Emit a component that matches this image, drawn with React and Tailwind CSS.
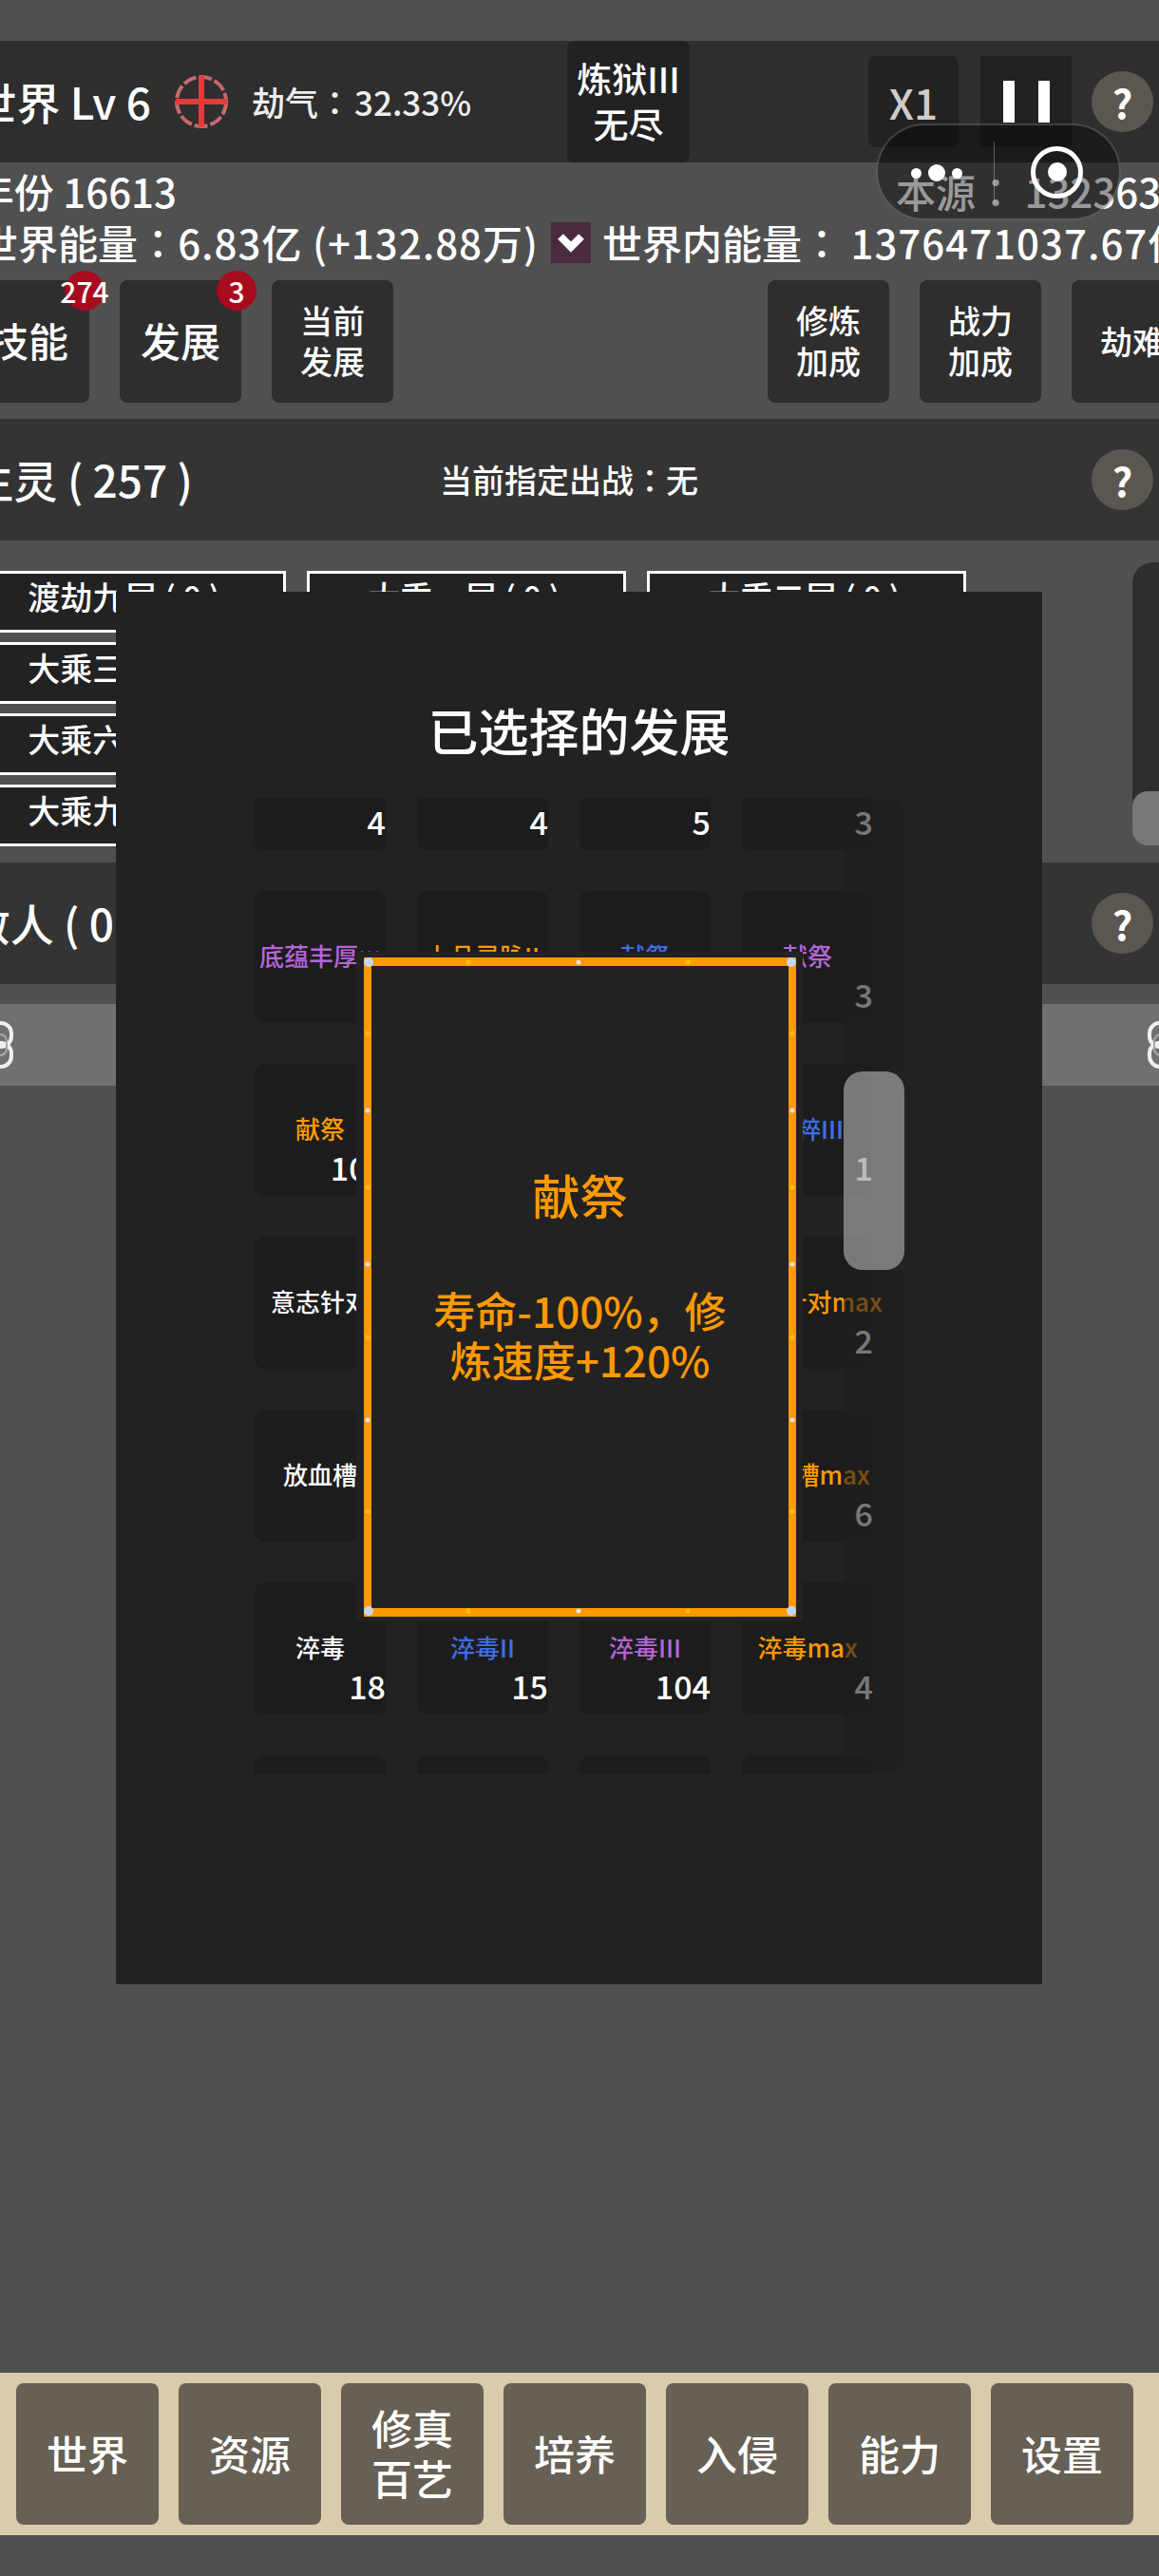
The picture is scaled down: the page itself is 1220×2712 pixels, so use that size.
const CELLS = [
  [{ value: 4 }, { value: 4 }, { value: 5 }, { value: 3 }],
  [
    {
      name: (
        <>
          底蕴丰厚
          <span className="relative -top-[8px] font-['Liberation_Sans'] text-[24px]">···</span>
        </>
      ),
      color: 'text-[#b565d8]',
      value: 3,
    },
    { name: '上品灵脉II', color: 'text-[#ff9900]', value: 7 },
    { name: '献祭', color: 'text-[#3f6ee8]', value: 8 },
    { name: '献祭', color: 'text-[#b565d8]', value: 3 },
  ],
  [
    { name: '献祭', color: 'text-[#ff9900]', value: 100 },
    { name: '献祭II', color: 'text-[#3f6ee8]', value: 9 },
    { name: '献祭III', color: 'text-[#b565d8]', value: 6 },
    { name: '精粹III', color: 'text-[#3f6ee8]', value: 1 },
  ],
  [
    { name: '意志针对', color: 'text-white', value: 2 },
    { name: '意志针对II', color: 'text-[#3f6ee8]', value: 5 },
    { name: '意志针对III', color: 'text-[#b565d8]', value: 4 },
    { name: '意志针对max', color: 'text-[#ff9900]', value: 2 },
  ],
  [
    { name: '放血槽', color: 'text-white', value: 3 },
    { name: '放血槽II', color: 'text-[#3f6ee8]', value: 8 },
    { name: '放血槽III', color: 'text-[#b565d8]', value: 5 },
    { name: '放血槽max', color: 'text-[#ff9900]', value: 6 },
  ],
  [
    { name: '淬毒', color: 'text-white', value: 18 },
    { name: '淬毒II', color: 'text-[#3f6ee8]', value: 15 },
    { name: '淬毒III', color: 'text-[#b565d8]', value: 104 },
    { name: '淬毒max', color: 'text-[#ff9900]', value: 4 },
  ],
  [{}, {}, {}, {}],
]

const UNITS = ['渡劫九层', '大乘一层', '大乘二层', '大乘三层', '大乘四层', '大乘五层', '大乘六层', '大乘七层', '大乘八层', '大乘九层']
const NAV = [['世界'], ['资源'], ['修真', '百艺'], ['培养'], ['入侵'], ['能力'], ['设置']]

function Colon() {
  return <span className="font-['Noto_Sans_CJK_TC']">：</span>
}

function Help() {
  return (
    <div className="w-[65px] h-[64px] rounded-full bg-[#5b5650] flex items-center justify-center text-white text-[42px] font-bold leading-none shrink-0">
      ?
    </div>
  )
}

function ActionButton({ lines, badge, big }) {
  return (
    <div className={`relative w-[128px] h-[129px] pb-[3px] rounded-lg bg-[#2e2e2e] flex flex-col items-center justify-center text-white shrink-0 ${big ? 'text-[42px] leading-[50px]' : 'text-[34px] leading-[43px]'}`}>
      {lines.map(line => <div key={line}>{line}</div>)}
      {badge && (
        <div className="absolute -top-[10px] right-[-16px] w-[42px] h-[42px] rounded-full bg-[#a80a1e] flex items-center justify-center text-[30px] leading-none">
          {badge}
        </div>
      )}
    </div>
  )
}

function Chain() {
  return (
    <svg width="30" height="50" viewBox="0 0 30 50" fill="none" className="shrink-0">
      <rect x="3" y="2" width="24" height="25" rx="11" stroke="#f0f0f0" strokeWidth="4" />
      <rect x="3" y="23" width="24" height="25" rx="11" stroke="#f0f0f0" strokeWidth="4" />
      <rect x="8" y="14" width="14" height="22" rx="7" stroke="#aaaaaa" strokeWidth="2" />
    </svg>
  )
}

const DOTS_X = [[110, '#ffc400'], [226, '#dbe6ff'], [341, '#ffc400']]
const DOTS_Y = [[80, '#ffc400'], [161, '#dbe6ff'], [242, '#ffc400'], [323, '#dbe6ff'], [400, '#ffc400'], [487, '#dbe6ff'], [583, '#ffc400']]

// orange frame ornaments
function FrameDots() {
  return (
    <svg width="455" height="694" viewBox="0 0 455 694" className="absolute left-[8px] top-[6px]">
      {DOTS_X.map(([x, c]) => (
        <g key={x} fill={c}>
          <circle cx={x} cy="5" r="2.5" />
          <circle cx={x} cy="688" r="2.5" />
        </g>
      ))}
      {DOTS_Y.map(([y, c]) => (
        <g key={y} fill={c}>
          <circle cx="4" cy={y} r="2.5" />
          <circle cx="451" cy={y} r="2.5" />
        </g>
      ))}
      <g fill="#c5d6f7">
        <circle cx="5" cy="5" r="5" />
        <circle cx="450" cy="5" r="5" />
        <circle cx="5" cy="688" r="5" />
        <circle cx="450" cy="688" r="5" />
      </g>
    </svg>
  )
}

function Cell({ cell }) {
  return (
    <div className="relative w-[138px] h-[139px] rounded-[10px] bg-[#1c1c1c] pt-[53px] flex flex-col">
      <div className={`h-[30px] flex justify-center whitespace-nowrap text-[26px] leading-[30px] ${cell.color || ''}`}>
        <div>{cell.name}</div>
      </div>
      <div className="mt-[6px] h-[40px] text-right text-white text-[34px] leading-[40px]">{cell.value}</div>
    </div>
  )
}

export default function App() {
  return (
    <div className="relative w-[1220px] h-[2712px] overflow-hidden bg-[#505050] flex flex-col font-medium font-['Noto_Sans_CJK_SC','Noto_Sans',sans-serif]">
      {/* top bar */}
      <div className="mt-[43px] h-[128px] bg-[#2e2e2e] flex items-center text-white shrink-0">
        <div className="w-[159px] pb-[2px] flex justify-end whitespace-nowrap text-[46px] leading-none shrink-0">世界 Lv 6</div>
        <svg width="60" height="60" viewBox="0 0 60 60" className="ml-[23px] shrink-0">
          <circle cx="30" cy="30" r="26" fill="none" stroke="#c46a6a" strokeWidth="4" strokeDasharray="14 3" />
          <path d="M30 3v54M3 30h54" stroke="#e53a3a" strokeWidth="6" />
        </svg>
        <div className="ml-[23px] w-[332px] pb-[2px] whitespace-nowrap text-[35px] leading-none text-[#eeeeee] shrink-0">
          劫气<Colon /><span className="ml-[3px]">32.33%</span>
        </div>
        <div className="w-[129px] h-full pb-[3px] rounded-lg bg-[#222222] flex flex-col items-center justify-center text-[37px] leading-[48px] shrink-0">
          <div>炼狱III</div>
          <div>无尽</div>
        </div>
        <div className="ml-[188px] w-[95px] h-[96px] rounded-lg bg-[#222222] flex items-center justify-center text-[44px] text-[#cccccc] shrink-0">X1</div>
        <div className="ml-[23px] w-[96px] h-[96px] bg-[#222222] flex items-center justify-center gap-[25px] shrink-0">
          <div className="w-[12px] h-[44px] bg-white" />
          <div className="w-[12px] h-[44px] bg-white" />
        </div>
        <div className="ml-[21px]"><Help /></div>
      </div>

      {/* stats */}
      <div className="pt-[5px] text-white text-[42px] leading-[50px] whitespace-nowrap shrink-0">
        <div className="flex h-[54px]">
          <div className="w-[186px] flex justify-end shrink-0">年份 16613</div>
          <div className="ml-[757px] shrink-0">本源<Colon /> 13236372</div>
        </div>
        <div className="flex h-[50px] items-center">
          <div className="w-[567px] flex justify-end shrink-0">
            世界能量<Colon /> <span className="tracking-[1px]">6.83亿 (+132.88万)</span>
          </div>
          <div className="ml-[13px] w-[42px] h-[43px] bg-[#4a2a3e] flex items-center justify-center shrink-0">
            <svg width="32" height="26" viewBox="0 0 32 26" fill="none">
              <path d="M5 7l11 11L27 7" stroke="white" strokeWidth="8" />
            </svg>
          </div>
          <div className="ml-[12px] shrink-0">
            世界内能量<Colon /> <span className="tracking-[1px]">1376471037.67亿</span>
          </div>
        </div>
      </div>

      {/* action buttons */}
      <div className="mt-[15px] -ml-[34px] w-[1290px] flex justify-between shrink-0">
        <div className="flex gap-[32px]">
          <ActionButton lines={['技能']} badge="274" big />
          <ActionButton lines={['发展']} badge="3" big />
          <ActionButton lines={['当前', '发展']} />
        </div>
        <div className="flex gap-[32px]">
          <ActionButton lines={['修炼', '加成']} />
          <ActionButton lines={['战力', '加成']} />
          <ActionButton lines={['劫难']} />
        </div>
      </div>

      {/* units */}
      <div className="mt-[17px] h-[128px] bg-[#343434] flex items-center text-white shrink-0">
        <div className="w-[203px] pb-[2px] flex justify-end whitespace-nowrap text-[46px] leading-none shrink-0">生灵 ( 257 )</div>
        <div className="ml-[260px] w-[686px] whitespace-nowrap text-[34px] leading-none shrink-0">当前指定出战<Colon />无</div>
        <Help />
      </div>

      <div className="h-[339px] flex items-start shrink-0">
        <div className="mt-[32px] -ml-[35px] w-[1052px] grid grid-cols-3 gap-x-[22px] gap-y-[10px] shrink-0">
          {UNITS.map(unit => (
            <div key={unit} className="h-[65px] border-[3px] border-white bg-[#222222] pb-[12px] pr-[5px] flex items-center justify-center text-white text-[34px] leading-none whitespace-nowrap">
              {unit} ( 0 )
            </div>
          ))}
        </div>
        <div className="mt-[23px] ml-[175px] w-[60px] h-[298px] rounded-l-[22px] bg-[#2e2e2e] flex flex-col justify-end shrink-0">
          <div className="h-[57px] rounded-l-[16px] bg-[#777777]" />
        </div>
      </div>

      {/* enemies */}
      <div className="h-[128px] bg-[#343434] flex items-center text-white shrink-0">
        <div className="w-[120px] pb-[2px] flex justify-end whitespace-nowrap text-[46px] leading-none shrink-0">敌人 ( 0</div>
        <div className="ml-[1029px]"><Help /></div>
      </div>
      <div className="mt-[21px] h-[86px] bg-[#707070] flex items-center justify-between shrink-0">
        <div className="-ml-[15px]"><Chain /></div>
        <div className="-mr-[17px]"><Chain /></div>
      </div>

      {/* bottom nav */}
      <div className="mt-auto mb-[43px] h-[171px] bg-[#d9cbab] px-[17px] flex items-center gap-[21px] shrink-0">
        {NAV.map(lines => (
          <div key={lines[0]} className="w-[150px] h-[149px] pb-[3px] rounded-lg bg-[#676054] flex flex-col items-center justify-center text-white text-[43px] leading-[53px] shrink-0">
            {lines.map(line => <div key={line}>{line}</div>)}
          </div>
        ))}
      </div>

      {/* selected developments dialog */}
      <div className="absolute left-[122px] top-[623px] w-[975px] h-[1466px] bg-[#222222]">
        <div className="mt-[113px] h-[64px] text-center text-white text-[53px] leading-[64px]">已选择的发展</div>
        <div className="absolute left-[146px] top-[218px] w-[684px] h-[1027px] overflow-hidden">
          <div className="-mt-[85px] grid grid-cols-[repeat(4,138px)] gap-x-[33px] gap-y-[43px]">
            {CELLS.flat().map((cell, i) => <Cell key={i} cell={cell} />)}
          </div>
          <div className="absolute right-0 top-0 w-[64px] h-full flex flex-col">
            <div className="h-[287px] rounded-t-[20px] bg-[#1e1e1e]/60" />
            <div className="h-[209px] rounded-[20px] bg-[#a1a1a1]/70" />
            <div className="flex-1 rounded-b-[20px] bg-[#1e1e1e]/60" />
          </div>
        </div>

        {/* item detail */}
        <div className="absolute left-[253px] top-[379px] w-[470px] h-[705px] bg-[#222222]">
          <div className="absolute left-[8px] top-[6px] w-[455px] h-[694px] border-x-[8px] border-y-[9px] border-[#ff9900] flex flex-col items-center text-[#ff9900]">
            <div className="mt-[210px] text-[50px] leading-[60px]">献祭</div>
            <div className="mt-[66px] text-center text-[44px] leading-[52px]">
              <div>寿命-100%，修</div>
              <div>炼速度+120%</div>
            </div>
          </div>
          <FrameDots />
        </div>
      </div>

      {/* wechat capsule */}
      <div className="absolute left-[922px] top-[130px] w-[258px] h-[102px] rounded-full border-2 border-white/20 bg-black/40 flex items-center">
        <div className="ml-[35px] mt-[2px] flex items-center gap-[7px]">
          <div className="w-[11px] h-[11px] rounded-full bg-white" />
          <div className="w-[18px] h-[18px] rounded-full bg-white" />
          <div className="w-[11px] h-[11px] rounded-full bg-white" />
        </div>
        <div className="ml-[33px] w-[1px] h-[65px] bg-white/30" />
        <div className="ml-[38px] w-[55px] h-[55px] rounded-full border-[5px] border-white flex items-center justify-center">
          <div className="w-[20px] h-[20px] rounded-full bg-white" />
        </div>
      </div>
    </div>
  )
}
